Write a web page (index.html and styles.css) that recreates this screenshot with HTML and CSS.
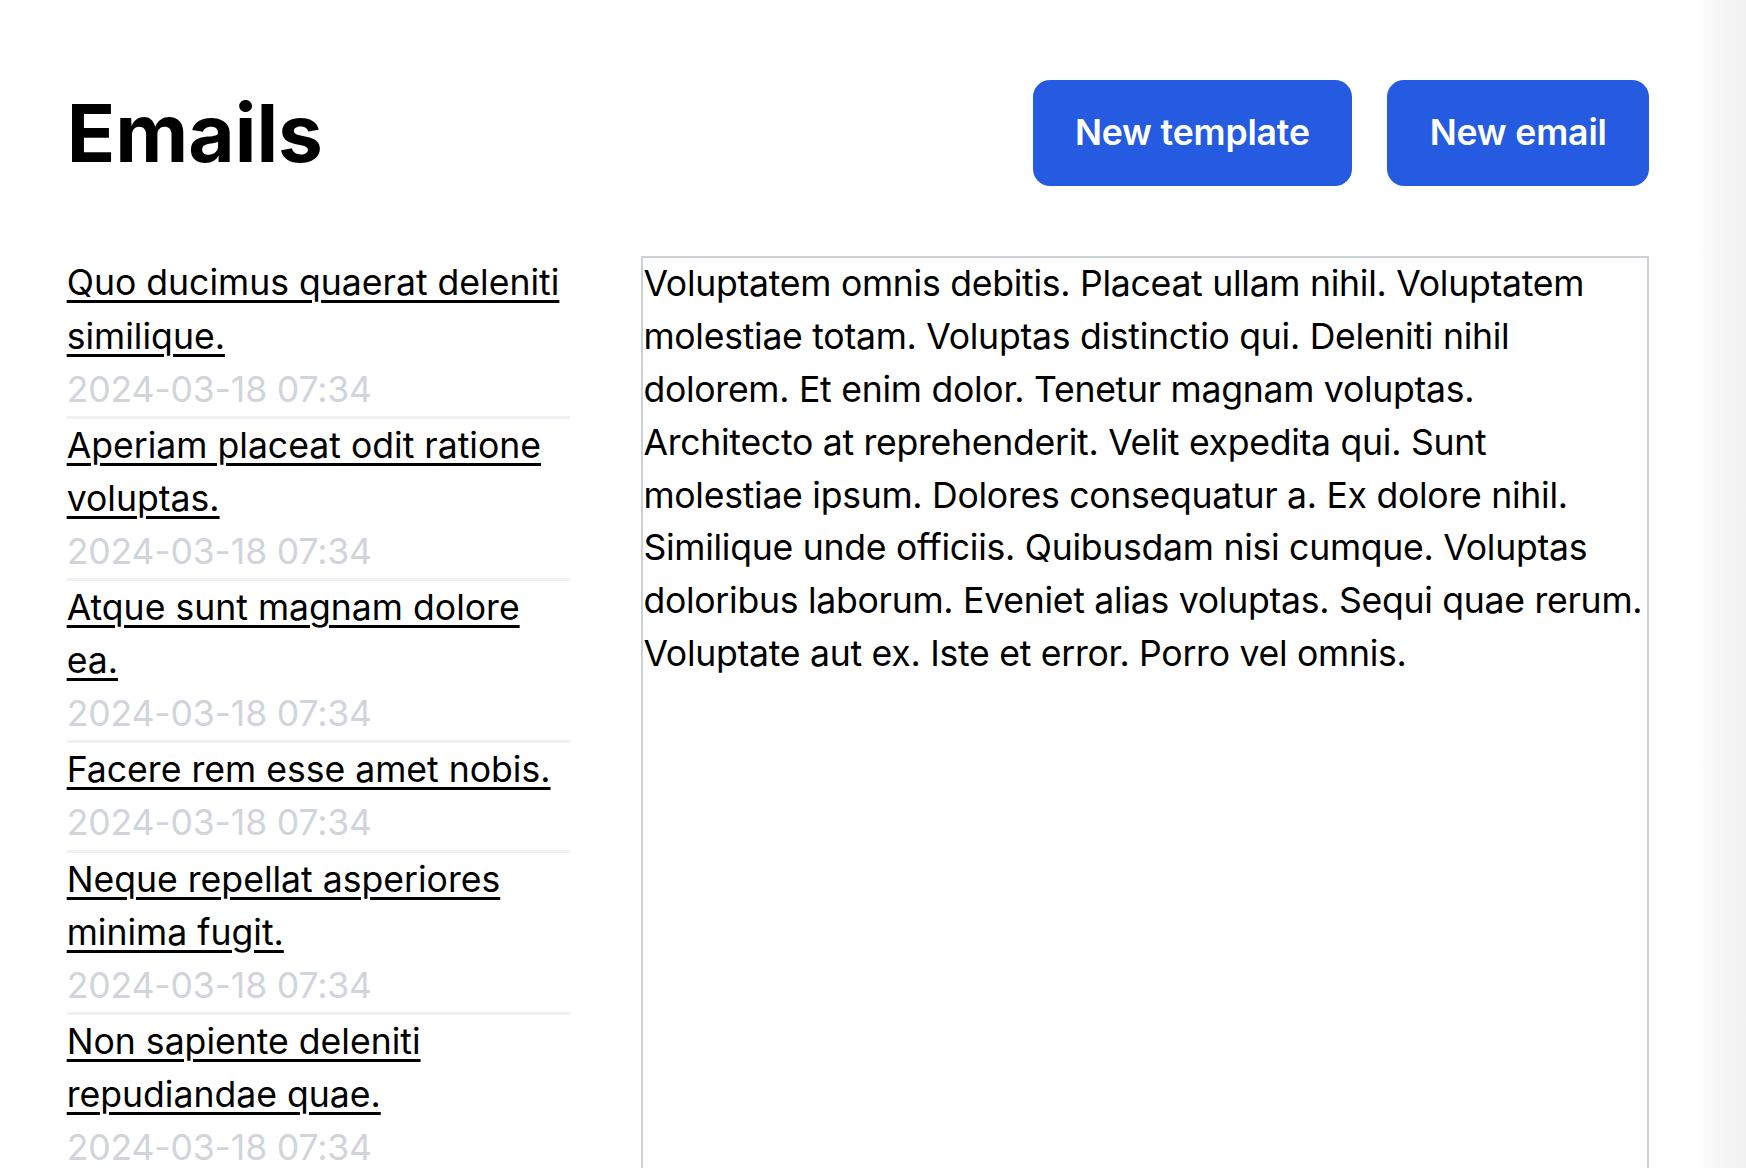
FILE: index.html
```html
<!DOCTYPE html>
<html lang="en">
<head>
<meta charset="utf-8">
<title>Emails</title>
<link rel="stylesheet" href="styles.css">
</head>
<body>
<div class="page">
  <main class="main">
    <header class="header">
      <h1 class="title">Emails</h1>
      <div class="actions">
        <a class="btn" href="#">New template</a>
        <a class="btn" href="#">New email</a>
      </div>
    </header>
    <section class="content">
      <ul class="list">
        <li class="item"><a class="item-link" href="#">Quo ducimus quaerat deleniti similique.</a><div class="item-date">2024-03-18 07:34</div></li>
        <li class="item"><a class="item-link" href="#">Aperiam placeat odit ratione voluptas.</a><div class="item-date">2024-03-18 07:34</div></li>
        <li class="item"><a class="item-link" href="#">Atque sunt magnam dolore ea.</a><div class="item-date">2024-03-18 07:34</div></li>
        <li class="item"><a class="item-link" href="#">Facere rem esse amet nobis.</a><div class="item-date">2024-03-18 07:34</div></li>
        <li class="item"><a class="item-link" href="#">Neque repellat asperiores minima fugit.</a><div class="item-date">2024-03-18 07:34</div></li>
        <li class="item"><a class="item-link" href="#">Non sapiente deleniti repudiandae quae.</a><div class="item-date">2024-03-18 07:34</div></li>
        <li class="item"><a class="item-link" href="#">Dolorem et quia sit.</a><div class="item-date">2024-03-18 07:34</div></li>
      </ul>
      <div class="preview">Voluptatem omnis debitis. Placeat ullam nihil. Voluptatem molestiae totam. Voluptas distinctio qui. Deleniti nihil dolorem. Et enim dolor. Tenetur magnam voluptas. Architecto at reprehenderit. Velit expedita qui. Sunt molestiae ipsum. Dolores consequatur a. Ex dolore nihil. Similique unde officiis. Quibusdam nisi cumque. Voluptas doloribus laborum. Eveniet alias voluptas. Sequi quae rerum. Voluptate aut ex. Iste et error. Porro vel omnis.</div>
    </section>
  </main>
  <div class="edge"></div>
</div>
</body>
</html>
```
FILE: styles.css
```css
html, body {
  margin: 0;
  padding: 0;
  background: #ffffff;
}

body {
  font-family: "Inter", "Noto Sans", sans-serif;
  color: #000000;
  font-size: 35.6px;
  line-height: 53.1px;
  letter-spacing: -0.16px;
  height: 1168px;
  overflow: hidden;
}

.page {
  display: flex;
  height: 1168px;
}

.main {
  flex: 1;
  padding: 80px 48px 0 66.7px;
  min-width: 0;
}

.edge {
  width: 49px;
  flex: none;
  background: linear-gradient(to right, #ffffff 0%, #f7f7f7 40%, #f1f1f1 100%);
}

.header {
  display: flex;
  align-items: center;
  justify-content: space-between;
  height: 105.7px;
}

.title {
  margin: 0;
  font-size: 80px;
  line-height: 89px;
  font-weight: 700;
  letter-spacing: 0;
}

.actions {
  display: flex;
  gap: 35.3px;
}

.btn {
  display: block;
  background: #245be1;
  color: #ffffff;
  text-decoration: none;
  font-weight: 600;
  font-size: 35.6px;
  line-height: 53.4px;
  padding: 26.15px 42.3px;
  border-radius: 17px;
}

.content {
  display: flex;
  align-items: flex-start;
  gap: 71.7px;
  margin-top: 70.8px;
}

.list {
  list-style: none;
  margin: 0;
  padding: 0;
  width: 503px;
  flex: none;
}

.item {
  border-bottom: 3px solid #f0f1f4;
}

.item-link {
  display: block;
  color: #000000;
  letter-spacing: 0;
  text-decoration: underline;
  text-decoration-thickness: 2.5px;
  text-underline-offset: 5px;
}

.item-date {
  color: #d1d5db;
}

.preview {
  flex: 1;
  min-width: 0;
  height: 1000px;
  border: 2px solid #cdd0d6;
  padding: 0;
  line-height: 52.8px;
  letter-spacing: -0.27px;
}
```
